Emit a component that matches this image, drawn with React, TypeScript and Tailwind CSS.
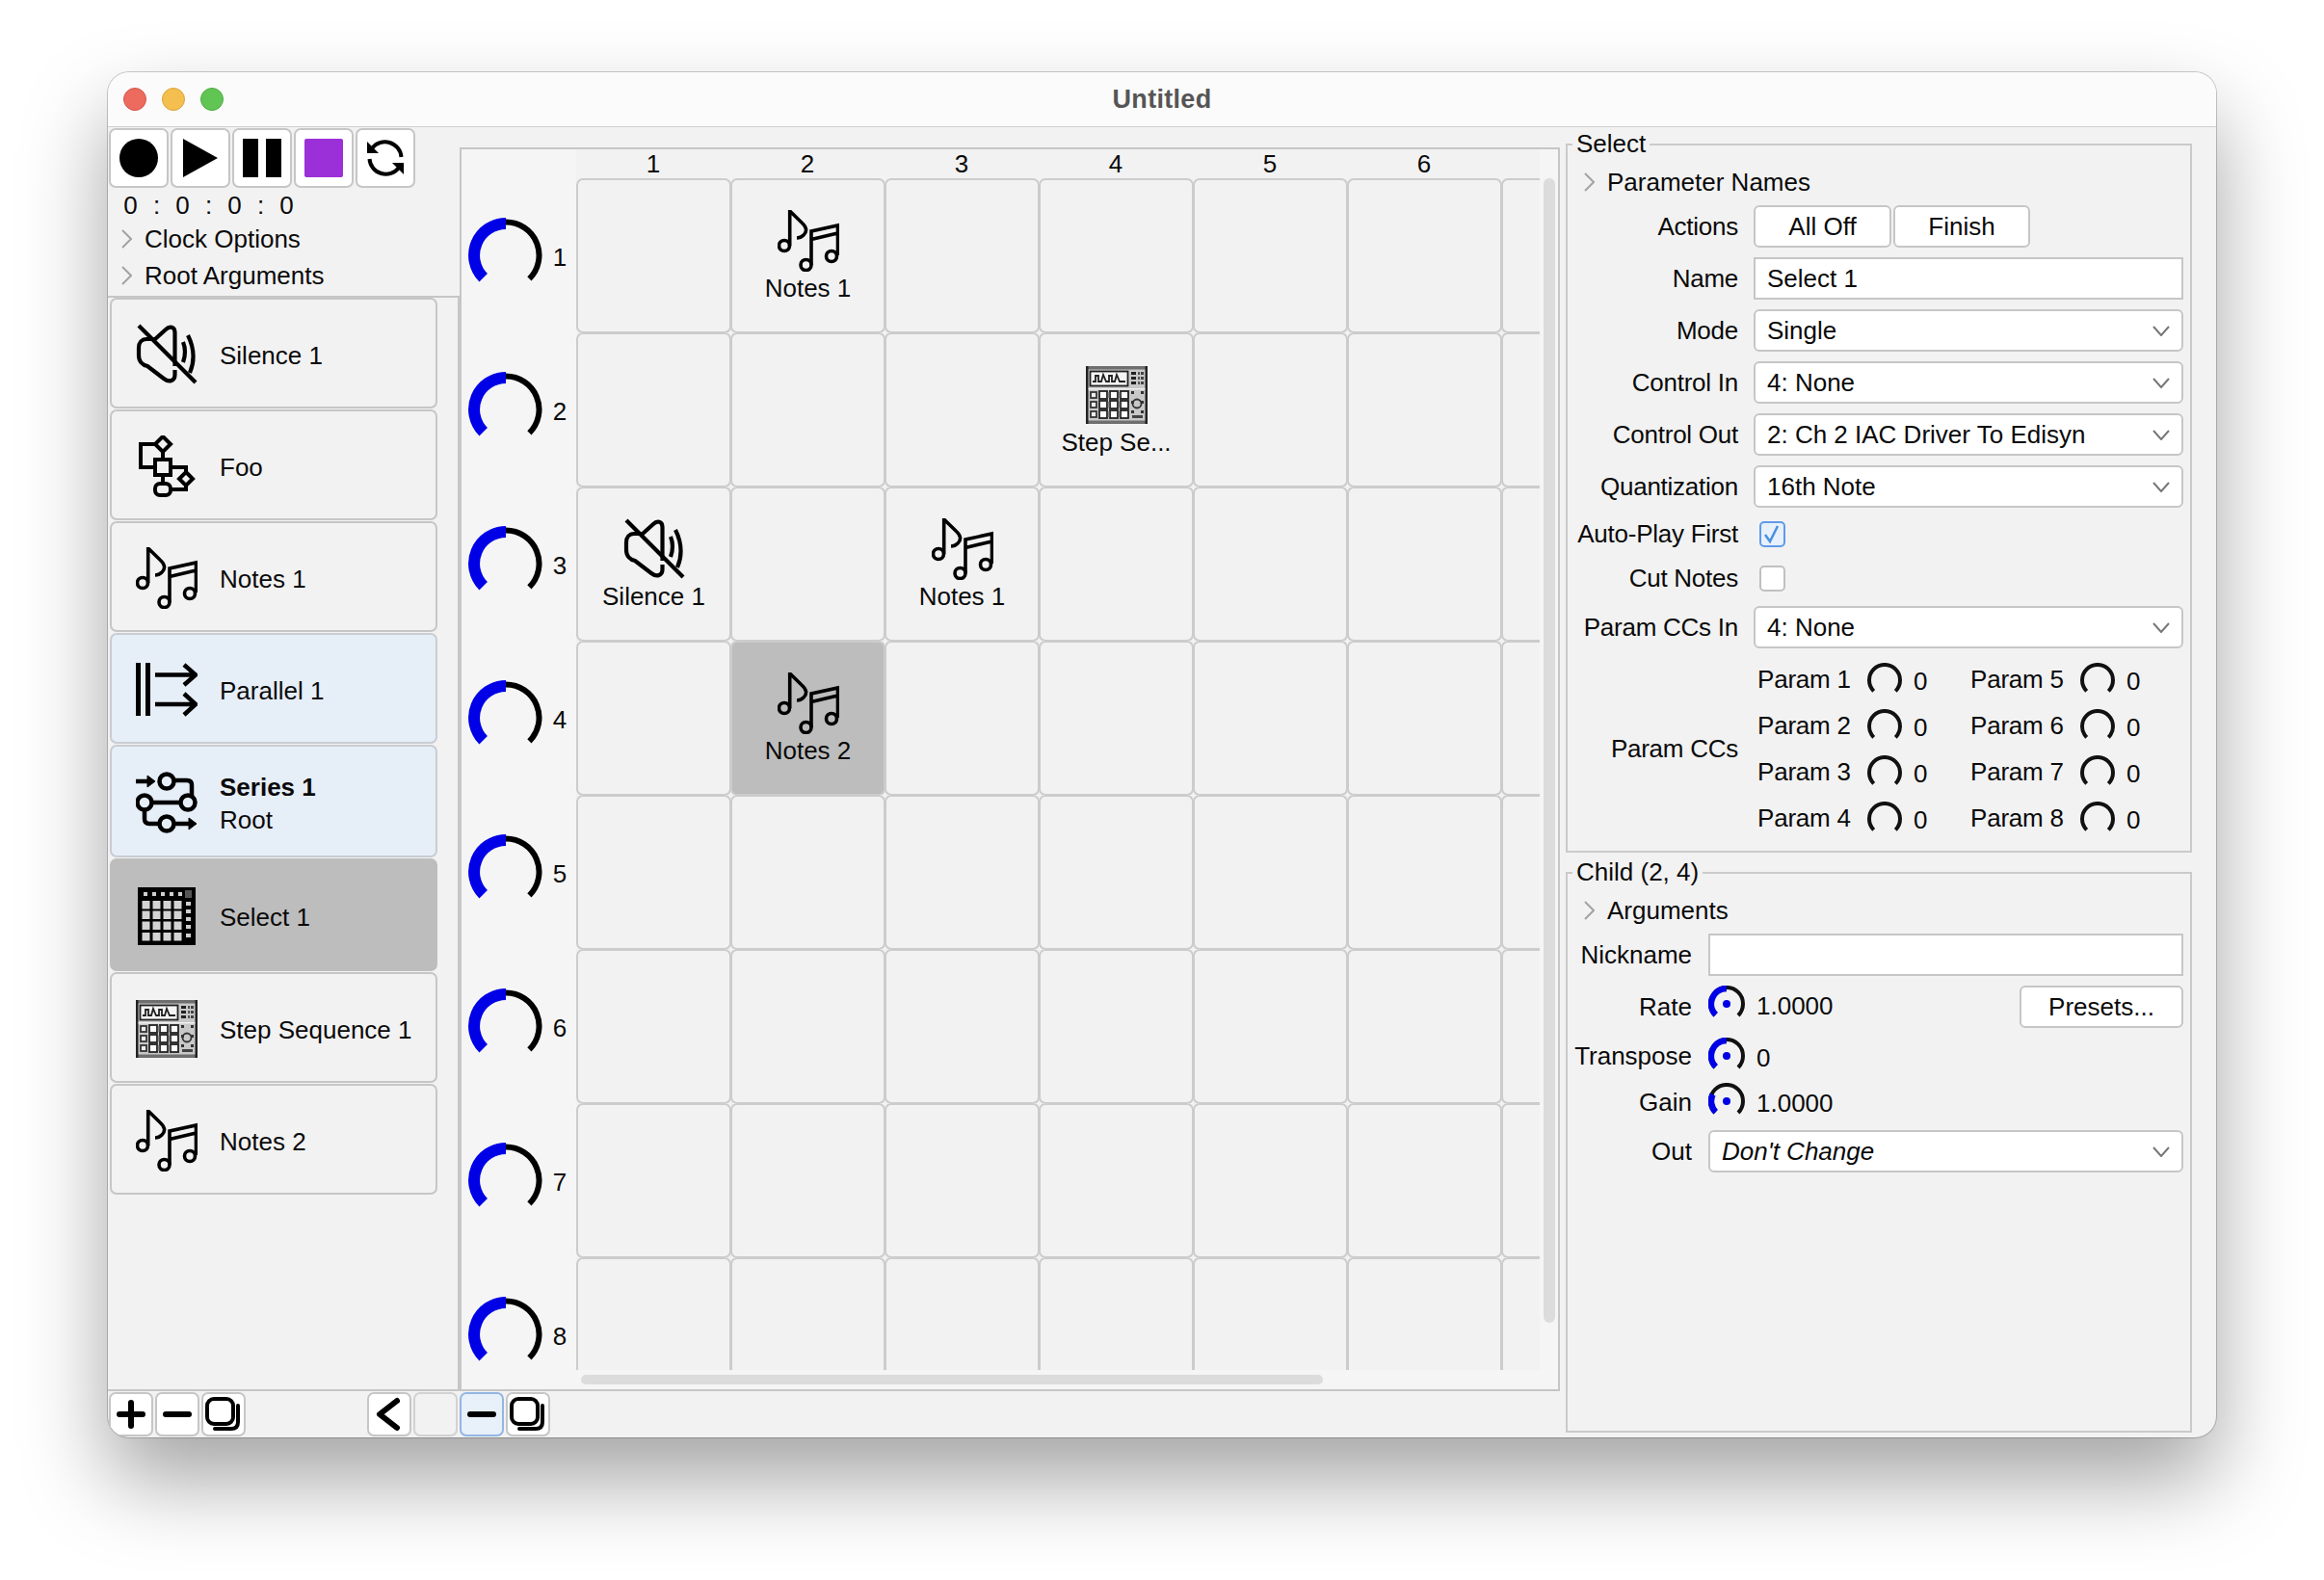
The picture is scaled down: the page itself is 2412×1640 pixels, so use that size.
import type { ReactNode } from "react";

type IconName = "silence" | "foo" | "notes" | "parallel" | "series" | "select" | "step";

function Icon({ name }: { name: IconName }) {
  if (name === "silence") {
    return (
      <svg width="64" height="64" viewBox="0 0 64 64" fill="none" stroke="#000" strokeWidth="4.2" className="shrink-0">
        <g transform="translate(2 2)">
          <path d="M1 0 L60 59" />
          <path d="M38.5 42 V7 C38.5 1 33 0 29 4 L18 14 H9 C4 14 1 18 1 23 V31 C1 37 5 41 10 42 L27 55 C32 59 38.5 58 38.5 51 V46" />
          <path d="M47 17 Q51 27 47 38" />
          <path d="M52 10 Q62 30 54 49" />
        </g>
      </svg>
    );
  }
  if (name === "foo") {
    return (
      <svg width="64" height="64" viewBox="0 0 64 64" fill="none" stroke="#000" strokeWidth="4" className="shrink-0">
        <path d="M28 1 L36 9 L28 17 L20 9 Z" />
        <rect x="20" y="25" width="16" height="16" />
        <path d="M52 38 L59 45 L52 52 L45 45 Z" />
        <rect x="20" y="50" width="16" height="12" rx="5" />
        <path d="M20 9 H5 V33 H20 M28 17 V25 M28 41 V50 M36 33 H52 V38 M52 52 V56 H36" />
      </svg>
    );
  }
  if (name === "notes") {
    return (
      <svg width="64" height="64" viewBox="0 0 64 64" fill="none" stroke="#000" strokeWidth="3.6" className="shrink-0">
        <circle cx="7" cy="37" r="5.5" />
        <path d="M12.7 37 V1 L25 13 Q33 20 27 26 Q24 29 20 29" />
        <circle cx="29.5" cy="57" r="5.5" />
        <circle cx="56" cy="48" r="5.5" />
        <path d="M35 57 V22 L62.5 16 V47 M35 30.5 L62.5 24" />
      </svg>
    );
  }
  if (name === "parallel") {
    return (
      <svg width="64" height="64" viewBox="0 0 64 64" fill="none" stroke="#000" strokeWidth="4.5" className="shrink-0">
        <path d="M2.5 4 V59 M12.5 4 V59" strokeWidth="5" />
        <path d="M20 16.5 H62 M50 6 L62 16.5 L50 27 M20 47 H62 M50 36 L62 47 L50 58" />
      </svg>
    );
  }
  if (name === "series") {
    return (
      <svg width="64" height="64" viewBox="0 0 64 64" fill="none" stroke="#000" strokeWidth="4.5" className="shrink-0">
        <path d="M0 10 H14" />
        <path d="M12 4 L20 10 L12 16 Z" fill="#000" strokeWidth="1" />
        <circle cx="32" cy="10" r="7.5" />
        <path d="M40 9 H53 Q58 9 58 14 V25" />
        <circle cx="54" cy="32" r="7.5" />
        <circle cx="9" cy="32" r="7.5" />
        <path d="M17 32 H46 M9 40 V49 Q9 54 14 54 H24" />
        <circle cx="32" cy="54" r="7.5" />
        <path d="M40 54 H56" />
        <path d="M55 48 L63 54 L55 60 Z" fill="#000" strokeWidth="1" />
      </svg>
    );
  }
  if (name === "select") {
    const xs = [4.5, 15.5, 26.5, 37.5];
    const ys = [14, 24.5, 35.5, 47];
    return (
      <svg width="64" height="64" viewBox="0 0 64 64" className="shrink-0">
        <g transform="translate(2 2)">
          <rect width="60" height="60" fill="#000" />
          {[6, 15, 24, 33, 42].map((x) => (
            <rect key={x} x={x} y="5" width="4" height="4" fill="#cfcfcf" />
          ))}
          <rect x="49" y="3" width="7" height="8" fill="#555" />
          {[15, 23, 31, 39, 48].map((y) => (
            <rect key={y} x="50" y={y} width="5" height="4" fill="#cfcfcf" />
          ))}
          {ys.map((y) =>
            xs.map((x) => <rect key={`${x}-${y}`} x={x} y={y} width="8" height="8.5" fill="#d4d4d4" />)
          )}
        </g>
      </svg>
    );
  }
  // step sequencer icon, mostly small grey blocks
  return (
    <svg width="64" height="64" viewBox="0 0 64 64" className="shrink-0">
      <g transform="translate(0 2)">
        <rect width="64" height="60" fill="#c8c8c8" />
        <rect width="64" height="3.5" fill="#6e6e6e" />
        <rect y="56.5" width="64" height="3.5" fill="#6e6e6e" />
        <rect width="2.5" height="60" fill="#222" />
        <rect x="61.5" width="2.5" height="60" fill="#222" />
        <rect x="4.5" y="5.5" width="39" height="15" fill="#f4f4f4" stroke="#222" strokeWidth="1.8" />
        <path d="M7 16 H10 V10 H13 V16 H16 L18 9 L21 16 H24 V10 H27 V16 H30 L32 9 L35 16 H41" fill="none" stroke="#222" strokeWidth="1.8" />
        {[6, 11, 16].map((y) => (
          <g key={y}>
            <rect x="47" y={y} width="5" height="3" fill="#222" />
            <rect x="54" y={y} width="2" height="3" fill="#555" />
            <rect x="57" y={y} width="3" height="3" fill="#444" />
          </g>
        ))}
        <rect x="2.5" y="23" width="59" height="1.5" fill="#f0f0f0" />
        {[27, 37, 47].map((y) => (
          <g key={y}>
            <rect x="5" y={y} width="6" height="6" fill="#eee" stroke="#333" strokeWidth="1.8" />
            <rect x="14" y={y - 1} width="8" height="8" fill="#fff" stroke="#222" strokeWidth="1.8" />
            <rect x="25" y={y - 1} width="8" height="8" fill="#fff" stroke="#222" strokeWidth="1.8" />
            <rect x="36" y={y - 1} width="8" height="8" fill="#fff" stroke="#222" strokeWidth="1.8" />
            <rect x="22.8" y={y} width="1.6" height="6" fill="#888" />
            <rect x="33.8" y={y} width="1.6" height="6" fill="#888" />
            <rect x="47" y={y - 1} width="3" height="3" fill="#333" />
            <rect x="57" y={y - 1} width="3" height="3" fill="#333" />
          </g>
        ))}
        <circle cx="53" cy="39" r="4.5" fill="none" stroke="#333" strokeWidth="1.8" />
        <rect x="48" y="51" width="11" height="3" fill="#444" />
      </g>
    </svg>
  );
}

function BigDial() {
  return (
    <svg width="78" height="78" viewBox="0 0 78 78" fill="none" className="shrink-0">
      <path d="M39 4.5 A34.5 34.5 0 0 1 63.4 63.4" stroke="#000" strokeWidth="6" />
      <path d="M15.7 62.3 A33 33 0 0 1 39 6" stroke="#0000e6" strokeWidth="12" />
    </svg>
  );
}

function ParamDial() {
  return (
    <svg width="36" height="36" viewBox="0 0 36 36" fill="none" className="shrink-0">
      <path d="M29.3 29.3 A16 16 0 1 0 6.7 29.3" stroke="#111" strokeWidth="4" />
    </svg>
  );
}

function ChildDial({ level }: { level: "full" | "low" }) {
  return (
    <svg width="38" height="38" viewBox="0 0 38 38" fill="none" className="shrink-0">
      <path d="M31 31 A17 17 0 1 0 7 31" stroke="#111" strokeWidth="4" />
      {level === "full" ? (
        <path d="M7.7 30.3 A16 16 0 0 1 19 3" stroke="#0000e6" strokeWidth="6.5" />
      ) : (
        <path d="M7.7 30.3 A16 16 0 0 1 4.6 12" stroke="#0000e6" strokeWidth="6.5" />
      )}
      <circle cx="19" cy="19" r="4" fill="#0000e6" />
    </svg>
  );
}

function Chevron() {
  return (
    <svg width="11" height="20" viewBox="0 0 11 20" fill="none" stroke="#a3a3a3" strokeWidth="2" className="shrink-0">
      <path d="M1 1 L10 10 L1 19" />
    </svg>
  );
}

function ToolButton({ children, w = "w-[62px] h-[62px]" }: { children: ReactNode; w?: string }) {
  return (
    <div className={`${w} box-border bg-white border-2 border-[#c6c6c6] rounded-[7px] flex items-center justify-center shrink-0`}>
      {children}
    </div>
  );
}

function Disclosure({ label, rowClass }: { label: string; rowClass: string }) {
  return (
    <div className={`flex items-center ${rowClass}`}>
      <Chevron />
      <span className="ml-[13px]">{label}</span>
    </div>
  );
}

type Track = { icon: IconName; name: string; sub?: string; h: string; tone?: "hover" | "selected" };

const tracks: Track[] = [
  { icon: "silence", name: "Silence 1", h: "h-[115px]" },
  { icon: "foo", name: "Foo", h: "h-[115px]" },
  { icon: "notes", name: "Notes 1", h: "h-[115px]" },
  { icon: "parallel", name: "Parallel 1", h: "h-[115px]", tone: "hover" },
  { icon: "series", name: "Series 1", sub: "Root", h: "h-[117px]", tone: "hover" },
  { icon: "select", name: "Select 1", h: "h-[117px]", tone: "selected" },
  { icon: "step", name: "Step Sequence 1", h: "h-[115px]" },
  { icon: "notes", name: "Notes 2", h: "h-[115px]" },
];

function TrackCard({ track }: { track: Track }) {
  const toneClass =
    track.tone === "hover"
      ? "bg-[#e6eef8] border-[#c9cdd2]"
      : track.tone === "selected"
        ? "bg-[#bdbdbd] border-[#bdbdbd]"
        : "bg-[#f2f2f2] border-[#c6c6c6]";
  return (
    <div className={`${track.h} ${toneClass} w-[340px] box-border border-2 rounded-[7px] mb-px flex items-center pl-[25px] gap-[23px]`}>
      <div className="pt-[2px]">
        <Icon name={track.icon} />
      </div>
      {track.sub ? (
        <div className="leading-[34px] pt-[4px]">
          <div className="font-bold">{track.name}</div>
          <div>{track.sub}</div>
        </div>
      ) : (
        <span className="pt-[5px]">{track.name}</span>
      )}
    </div>
  );
}

const cells: Record<string, { icon: IconName; name: string; selected?: boolean }> = {
  "0-1": { icon: "notes", name: "Notes 1" },
  "1-3": { icon: "step", name: "Step Se..." },
  "2-0": { icon: "silence", name: "Silence 1" },
  "2-2": { icon: "notes", name: "Notes 1" },
  "3-1": { icon: "notes", name: "Notes 2", selected: true },
};

function GridPanel() {
  const rows = [0, 1, 2, 3, 4, 5, 6, 7];
  const cols = [0, 1, 2, 3, 4, 5, 6];
  return (
    <div className="relative mt-[21px] w-[1142px] h-[1289px] box-border border-2 border-b-0 border-[#c6c6c6] bg-[#f5f5f5]">
      <div className="w-[1119px] h-[1267px] overflow-hidden">
        <div className="flex h-[30px]">
          <div className="w-[119px] shrink-0" />
          {cols.slice(0, 6).map((c) => (
            <div key={c} className="w-[160px] shrink-0 text-center leading-[30px] bg-[#f2f2f2]">
              {c + 1}
            </div>
          ))}
          <div className="flex-1 bg-[#f2f2f2]" />
        </div>
        {rows.map((r) => (
          <div key={r} className="flex h-[160px]">
            <div className="w-[119px] shrink-0 flex items-center pl-[7px]">
              <BigDial />
              <span className="w-[34px] text-center pt-[4px]">{r + 1}</span>
            </div>
            <div className="flex bg-[#f2f2f2]">
              {cols.map((c) => {
                const cell = cells[`${r}-${c}`];
                return (
                  <div
                    key={c}
                    className={`w-[161px] h-[161px] -mr-px box-border border-2 border-[#cccccc] rounded-[7px] shrink-0 flex flex-col items-center pt-[31px] ${
                      cell?.selected ? "bg-[#bdbdbd]" : ""
                    }`}
                  >
                    {cell && (
                      <>
                        <Icon name={cell.icon} />
                        <span className="mt-[2px] whitespace-nowrap">{cell.name}</span>
                      </>
                    )}
                  </div>
                );
              })}
            </div>
          </div>
        ))}
      </div>
      <div className="absolute top-[30px] right-[3px] w-[12px] h-[1188px] rounded-full bg-[#dcdcdc]" />
      <div className="absolute top-[1272px] left-[124px] w-[770px] h-[10px] rounded-full bg-[#dcdcdc]" />
    </div>
  );
}

function FormLabel({ text }: { text: string }) {
  return <span className="w-[177px] text-right whitespace-nowrap shrink-0 tracking-[-0.25px]">{text}</span>;
}

function Row({ label, children }: { label: string; children: ReactNode }) {
  return (
    <div className="flex items-center h-[44px] mt-[10px]">
      <FormLabel text={label} />
      <div className="ml-[16px] flex-1 flex">{children}</div>
    </div>
  );
}

function SelectBox({ value, italic }: { value: string; italic?: boolean }) {
  return (
    <div className={`h-[44px] w-full box-border bg-white border-2 border-[#c6c6c6] rounded-[6px] flex items-center justify-between pl-[12px] pr-[12px] ${italic ? "italic" : ""}`}>
      <span>{value}</span>
      <svg width="18" height="11" viewBox="0 0 18 11" fill="none" stroke="#777" strokeWidth="2" className="shrink-0">
        <path d="M1 1 L9 10 L17 1" />
      </svg>
    </div>
  );
}

function PushButton({ label, w }: { label: string; w: string }) {
  return (
    <div className={`${w} h-[44px] box-border bg-white border-2 border-[#c6c6c6] rounded-[6px] flex items-center justify-center shrink-0`}>
      {label}
    </div>
  );
}

function TextBox({ value }: { value: string }) {
  return (
    <div className="h-[44px] w-full box-border bg-white border-2 border-[#c6c6c6] flex items-center pl-[12px]">
      {value}
    </div>
  );
}

function GroupBox({ title, h, children, className }: { title: string; h: string; children: ReactNode; className?: string }) {
  return (
    <div className={`relative ${h} w-[650px] box-border border-2 border-[#cacaca] ${className ?? ""}`}>
      <span className="absolute -top-[17px] left-[5px] px-[4px] bg-[#f2f2f2] leading-[30px]">{title}</span>
      {children}
    </div>
  );
}

function ParamKnob({ n }: { n: number }) {
  return (
    <div className="flex items-center w-[223px] h-[48px]">
      <span className="w-[114px] shrink-0 tracking-[-0.2px]">Param {n}</span>
      <div className="pt-[2px]">
        <ParamDial />
      </div>
      <span className="ml-[12px] pt-[4px]">0</span>
    </div>
  );
}

function ChildRow({
  label,
  value,
  level,
  rowClass,
  labelClass,
}: {
  label: string;
  value: string;
  level: "full" | "low";
  rowClass: string;
  labelClass: string;
}) {
  return (
    <div className={`flex items-start ${rowClass}`}>
      <span className={`w-[129px] text-right shrink-0 ${labelClass}`}>{label}</span>
      <div className="ml-[17px]">
        <ChildDial level={level} />
      </div>
      <span className="ml-[12px] pt-[6px]">{value}</span>
    </div>
  );
}

function RightPanel() {
  return (
    <div className="flex-1 pl-[6px] pt-[17px]">
      <GroupBox title="Select" h="h-[736px]">
        <div className="pt-[18px] pl-[17px]">
          <Disclosure label="Parameter Names" rowClass="h-[40px]" />
        </div>
        <div className="pr-[7px] -mt-[6px]">
          <Row label="Actions">
            <PushButton label="All Off" w="w-[143px]" />
            <div className="ml-[2px]">
              <PushButton label="Finish" w="w-[142px]" />
            </div>
          </Row>
          <Row label="Name">
            <TextBox value="Select 1" />
          </Row>
          <Row label="Mode">
            <SelectBox value="Single" />
          </Row>
          <Row label="Control In">
            <SelectBox value="4: None" />
          </Row>
          <Row label="Control Out">
            <SelectBox value="2: Ch 2 IAC Driver To Edisyn" />
          </Row>
          <Row label="Quantization">
            <SelectBox value="16th Note" />
          </Row>
          <div className="flex items-center h-[30px] mt-[12px]">
            <FormLabel text="Auto-Play First" />
            <div className="ml-[22px] w-[27px] h-[27px] box-border bg-[#e8f0fb] border-2 border-[#5e9be8] rounded-[5px]">
              <svg width="23" height="23" viewBox="0 0 23 23" fill="none" stroke="#4a90e2" strokeWidth="2.5">
                <path d="M4 12 L9 19 L17 3" />
              </svg>
            </div>
          </div>
          <div className="flex items-center h-[30px] mt-[16px]">
            <FormLabel text="Cut Notes" />
            <div className="ml-[22px] w-[27px] h-[27px] box-border bg-white border-2 border-[#c0c0c0] rounded-[5px]" />
          </div>
          <div className="mt-[14px] flex items-center h-[44px]">
            <FormLabel text="Param CCs In" />
            <div className="ml-[16px] flex-1">
              <SelectBox value="4: None" />
            </div>
          </div>
          <div className="mt-[8px] flex items-center">
            <FormLabel text="Param CCs" />
            <div className="ml-[20px] grid grid-cols-2 w-[446px]">
              {[1, 5, 2, 6, 3, 7, 4, 8].map((n) => (
                <ParamKnob key={n} n={n} />
              ))}
            </div>
          </div>
        </div>
      </GroupBox>
      <GroupBox title="Child (2, 4)" h="h-[582px]" className="mt-[20px]">
        <div className="pt-[18px] pl-[17px]">
          <Disclosure label="Arguments" rowClass="h-[40px]" />
        </div>
        <div className="pr-[7px]">
          <div className="flex items-center h-[44px] mt-[4px]">
            <span className="w-[129px] text-right shrink-0">Nickname</span>
            <div className="ml-[17px] flex-1">
              <TextBox value="" />
            </div>
          </div>
          <div className="flex items-start mt-[10px] h-[44px]">
            <ChildRow label="Rate" value="1.0000" level="full" rowClass="h-[44px]" labelClass="pt-[7px]" />
            <div className="ml-auto">
              <PushButton label="Presets..." w="w-[170px]" />
            </div>
          </div>
          <ChildRow label="Transpose" value="0" level="full" rowClass="h-[38px] mt-[10px]" labelClass="pt-[4px]" />
          <ChildRow label="Gain" value="1.0000" level="low" rowClass="h-[36px] mt-[9px]" labelClass="pt-[5px]" />
          <div className="flex items-center h-[44px] mt-[13px]">
            <span className="w-[129px] text-right shrink-0">Out</span>
            <div className="ml-[17px] flex-1">
              <SelectBox value="Don't Change" italic />
            </div>
          </div>
        </div>
      </GroupBox>
    </div>
  );
}

function CopyIcon() {
  return (
    <svg width="40" height="36" viewBox="0 0 40 36" fill="none" stroke="#000" strokeWidth="4">
      <rect x="3" y="2" width="27" height="26" rx="7" />
      <path d="M35 9 V26 Q35 33 28 33 H11" strokeLinecap="round" />
    </svg>
  );
}

function MinusIcon() {
  return (
    <svg width="30" height="30" viewBox="0 0 30 30" stroke="#000" strokeWidth="6" strokeLinecap="round">
      <path d="M3 15 H27" />
    </svg>
  );
}

const BAR_BUTTON = "w-[46px] h-[46px]";

export default function App() {
  return (
    <div className="w-[2412px] h-[1640px] overflow-hidden bg-white pl-[112px] pt-[75px] font-['Liberation_Sans',sans-serif] text-[26px] leading-[30px] text-[#0a0a0a]">
      <div className="w-[2188px] h-[1417px] rounded-[22px] overflow-hidden bg-[#f2f2f2] shadow-[0_0_0_1px_rgba(0,0,0,0.2),0_44px_88px_rgba(0,0,0,0.36)]">
        <div className="h-[57px] box-border bg-[#fbfbfb] border-b border-[#cfcfcf] flex items-center pl-[16px] relative">
          <div className="flex gap-[16px]">
            <div className="w-[24px] h-[24px] rounded-full bg-[#ed6a5e] border border-[#d5544a]" />
            <div className="w-[24px] h-[24px] rounded-full bg-[#f5bf4f] border border-[#d9a23c]" />
            <div className="w-[24px] h-[24px] rounded-full bg-[#61c554] border border-[#4fab44]" />
          </div>
          <div className="absolute inset-x-0 text-center font-bold text-[27px] tracking-[0.3px] text-[#555555]">Untitled</div>
        </div>
        <div className="flex h-[1360px]">
          <div className="w-[1507px] shrink-0 flex flex-col">
            <div className="flex h-[1310px]">
              <div className="w-[365px] shrink-0 flex flex-col">
                <div className="flex gap-[2px] pl-px pt-px">
                  <ToolButton>
                    <svg width="40" height="40" viewBox="0 0 40 40">
                      <circle cx="20" cy="20" r="20" fill="#000" />
                    </svg>
                  </ToolButton>
                  <ToolButton>
                    <svg width="40" height="40" viewBox="0 0 40 40">
                      <path d="M2 0 L38 20 L2 40 Z" fill="#000" />
                    </svg>
                  </ToolButton>
                  <ToolButton>
                    <svg width="40" height="40" viewBox="0 0 40 40" fill="#000">
                      <rect width="16" height="40" />
                      <rect x="24" width="16" height="40" />
                    </svg>
                  </ToolButton>
                  <ToolButton>
                    <div className="w-[40px] h-[40px] bg-[#9b30d9] rounded-[2px]" />
                  </ToolButton>
                  <ToolButton>
                    <svg width="40" height="40" viewBox="0 0 40 40" fill="none" stroke="#000" strokeWidth="4">
                      <path d="M6 10 A17 17 0 0 1 36.5 19" />
                      <path d="M3.5 21 A17 17 0 0 0 34 30" />
                      <path d="M1 3 V15 H13 Z" fill="#000" stroke="none" />
                      <path d="M39 37 V25 H27 Z" fill="#000" stroke="none" />
                    </svg>
                  </ToolButton>
                </div>
                <div className="flex h-[34px] items-center pl-[10px] pt-[2px]">
                  {["0", ":", "0", ":", "0", ":", "0"].map((t, i) => (
                    <span key={i} className="w-[27px] text-center">
                      {t}
                    </span>
                  ))}
                </div>
                <div className="pl-[14px] h-[79px]">
                  <Disclosure label="Clock Options" rowClass="h-[38px]" />
                  <Disclosure label="Root Arguments" rowClass="h-[38px]" />
                </div>
                <div className="flex-1 border-t-2 border-r-2 border-[#c6c6c6] pl-[2px] -mt-px">
                  {tracks.map((t) => (
                    <TrackCard key={t.name} track={t} />
                  ))}
                </div>
              </div>
              <GridPanel />
            </div>
            <div className="h-[50px] box-border border-t-2 border-[#c6c6c6] flex gap-[2px] pl-px pt-px">
              <ToolButton w={BAR_BUTTON}>
                <svg width="30" height="30" viewBox="0 0 30 30" stroke="#000" strokeWidth="6" strokeLinecap="round">
                  <path d="M3 15 H27 M15 3 V27" />
                </svg>
              </ToolButton>
              <ToolButton w={BAR_BUTTON}>
                <MinusIcon />
              </ToolButton>
              <ToolButton w={BAR_BUTTON}>
                <CopyIcon />
              </ToolButton>
              <div className="w-[122px] shrink-0" />
              <ToolButton w={BAR_BUTTON}>
                <svg width="30" height="36" viewBox="0 0 30 36" fill="none" stroke="#000" strokeWidth="6" strokeLinecap="round" strokeLinejoin="round">
                  <path d="M23 4 L5 18 L23 32" />
                </svg>
              </ToolButton>
              <div className="w-[46px] h-[46px] box-border border-2 border-[#d2d2d2] rounded-[7px] bg-[#f2f2f2] shrink-0" />
              <div className="w-[46px] h-[46px] box-border border-2 border-[#92b6e2] rounded-[7px] bg-[#e8f0fa] shrink-0 flex items-center justify-center">
                <MinusIcon />
              </div>
              <ToolButton w={BAR_BUTTON}>
                <CopyIcon />
              </ToolButton>
            </div>
          </div>
          <RightPanel />
        </div>
      </div>
    </div>
  );
}
